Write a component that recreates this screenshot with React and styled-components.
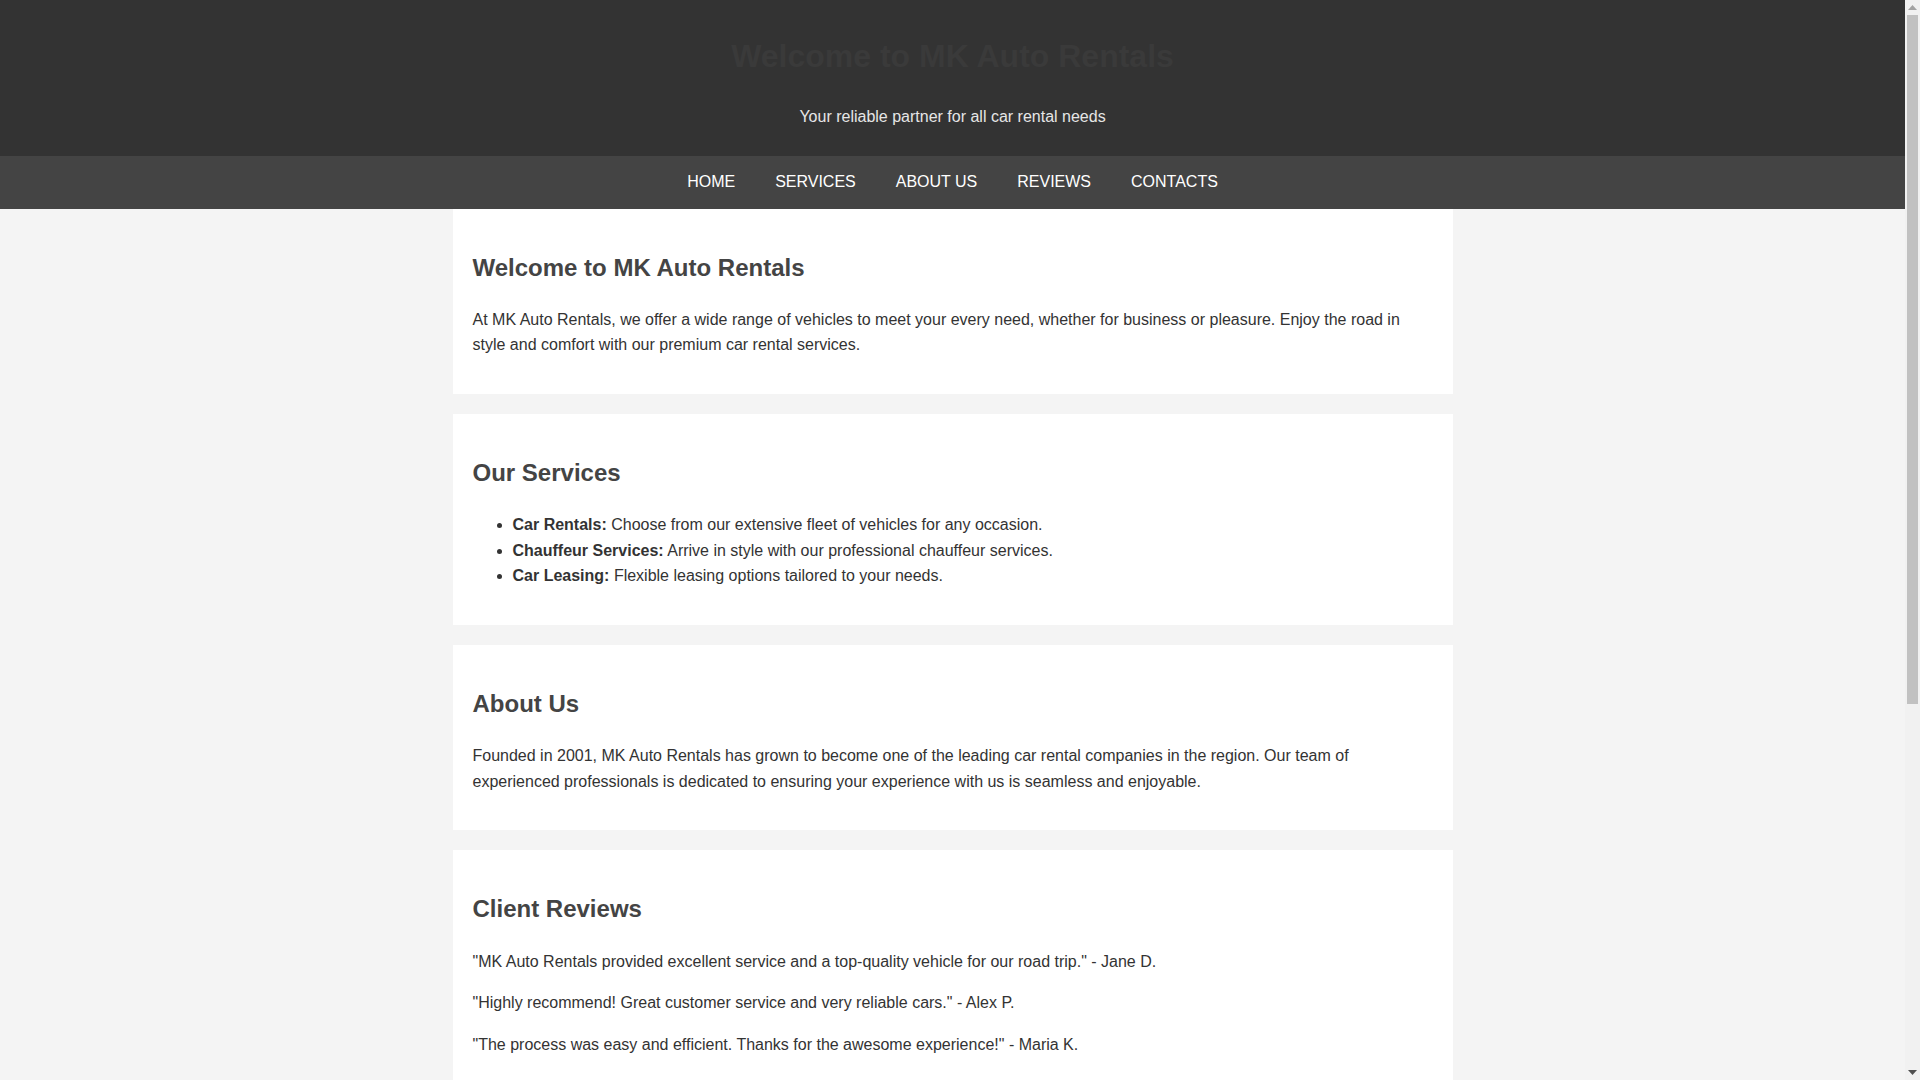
import React from "react";
import styled, { createGlobalStyle } from "styled-components";

const GlobalStyle = createGlobalStyle`
  html, body {
    margin: 0;
    padding: 0;
  }
  body {
    font-family: "Liberation Sans", Arial, Helvetica, sans-serif;
    font-size: 16px;
    line-height: 1.6;
    color: #333;
    background: #f4f4f4;
    padding-right: 15px;
  }
  * { box-sizing: border-box; }
`;

const ScrollTrack = styled.div`
  position: fixed;
  top: 0;
  right: 0;
  width: 15px;
  height: 100vh;
  background: #f1f1f1;
  display: flex;
  flex-direction: column;
  align-items: center;
  z-index: 10;
`;

const ScrollArrow = styled.div`
  width: 15px;
  height: 15px;
  display: flex;
  align-items: center;
  justify-content: center;
  flex: none;
`;

const ScrollThumb = styled.div`
  width: 11px;
  height: 689px;
  background: #c1c1c1;
  flex: none;
`;

const Spacer = styled.div`
  flex: 1;
`;

const Header = styled.header`
  background: #333;
  padding: 10px 0;
  text-align: center;
`;

const SiteTitle = styled.h1`
  margin: 21.44px 0;
  font-size: 32px;
  font-weight: bold;
  color: #3a3a3a;
`;

const Tagline = styled.p`
  margin: 16px 0;
  color: #e6e6e6;
`;

const Nav = styled.nav`
  background: #444;
  height: 53px;
`;

const NavList = styled.ul`
  list-style: none;
  margin: 0;
  padding: 0;
  height: 100%;
  display: flex;
  justify-content: center;
  align-items: center;
`;

const NavLink = styled.a`
  display: block;
  padding: 0 20px;
  color: #fff;
  text-decoration: none;
  text-transform: uppercase;
`;

const Main = styled.main`
  max-width: 1000px;
  margin: 0 auto;
`;

const Card = styled.section`
  background: #fff;
  padding: 20px;
  margin-bottom: 20px;
`;

const CardTitle = styled.h2`
  margin: 19.92px 0;
  font-size: 24px;
  font-weight: bold;
  color: #444;
`;

const Text = styled.p`
  margin: 16px 0;
`;

const List = styled.ul`
  margin: 16px 0;
  padding-left: 40px;
`;

const Form = styled.form`
  display: flex;
  flex-direction: column;
  margin: 16px 0;
`;

const Label = styled.label`
  font-weight: bold;
  color: #444;
`;

const Input = styled.input`
  height: 40px;
  margin: 0 0 15px;
  padding: 8px 10px;
  border: 1px solid #ccc;
  font: inherit;
`;

const TextArea = styled.textarea`
  height: 80px;
  margin: 0 0 15px;
  padding: 8px 10px;
  border: 1px solid #ccc;
  font: inherit;
  resize: vertical;
`;

const Button = styled.button`
  align-self: flex-start;
  padding: 10px 20px;
  background: #333;
  color: #fff;
  border: none;
  font: inherit;
  cursor: pointer;
`;

const Footer = styled.footer`
  background: #333;
  color: #fff;
  text-align: center;
  padding: 10px 0;
`;

const navItems = ["Home", "Services", "About Us", "Reviews", "Contacts"];

const services = [
  { name: "Car Rentals:", text: "Choose from our extensive fleet of vehicles for any occasion." },
  { name: "Chauffeur Services:", text: "Arrive in style with our professional chauffeur services." },
  { name: "Car Leasing:", text: "Flexible leasing options tailored to your needs." },
];

const reviews = [
  "\"MK Auto Rentals provided excellent service and a top-quality vehicle for our road trip.\" - Jane D.",
  "\"Highly recommend! Great customer service and very reliable cars.\" - Alex P.",
  "\"The process was easy and efficient. Thanks for the awesome experience!\" - Maria K.",
];

function Scrollbar() {
  return (
    <ScrollTrack aria-hidden="true">
      <ScrollArrow>
        <svg width="9" height="5" viewBox="0 0 9 5">
          <path d="M0 5 L4.5 0 L9 5 Z" fill="#a3a3a3" />
        </svg>
      </ScrollArrow>
      <ScrollThumb />
      <Spacer />
      <ScrollArrow>
        <svg width="9" height="5" viewBox="0 0 9 5">
          <path d="M0 0 L4.5 5 L9 0 Z" fill="#505050" />
        </svg>
      </ScrollArrow>
    </ScrollTrack>
  );
}

export default function App() {
  return (
    <>
      <GlobalStyle />
      <Scrollbar />
      <Header>
        <SiteTitle>Welcome to MK Auto Rentals</SiteTitle>
        <Tagline>Your reliable partner for all car rental needs</Tagline>
      </Header>
      <Nav>
        <NavList>
          {navItems.map((item) => (
            <li key={item}>
              <NavLink href={`#${item.toLowerCase().replace(" ", "")}`}>{item}</NavLink>
            </li>
          ))}
        </NavList>
      </Nav>
      <Main>
        <Card id="home">
          <CardTitle>Welcome to MK Auto Rentals</CardTitle>
          <Text>
            At MK Auto Rentals, we offer a wide range of vehicles to meet your every need, whether for
            business or pleasure. Enjoy the road in style and comfort with our premium car rental services.
          </Text>
        </Card>
        <Card id="services">
          <CardTitle>Our Services</CardTitle>
          <List>
            {services.map((s) => (
              <li key={s.name}>
                <strong>{s.name}</strong> {s.text}
              </li>
            ))}
          </List>
        </Card>
        <Card id="aboutus">
          <CardTitle>About Us</CardTitle>
          <Text>
            Founded in 2001, MK Auto Rentals has grown to become one of the leading car rental companies in
            the region. Our team of experienced professionals is dedicated to ensuring your experience with us
            is seamless and enjoyable.
          </Text>
        </Card>
        <Card id="reviews">
          <CardTitle>Client Reviews</CardTitle>
          {reviews.map((r) => (
            <Text key={r}>{r}</Text>
          ))}
        </Card>
        <Card id="contacts">
          <CardTitle>Contact Us</CardTitle>
          <Form onSubmit={(e) => e.preventDefault()}>
            <Label htmlFor="name">Name:</Label>
            <Input id="name" type="text" />
            <Label htmlFor="email">Email:</Label>
            <Input id="email" type="email" />
            <Label htmlFor="message">Message:</Label>
            <TextArea id="message" />
            <Button type="submit">Send</Button>
          </Form>
        </Card>
      </Main>
      <Footer>
        <Text>&copy; 2024 MK Auto Rentals. All rights reserved.</Text>
      </Footer>
    </>
  );
}
